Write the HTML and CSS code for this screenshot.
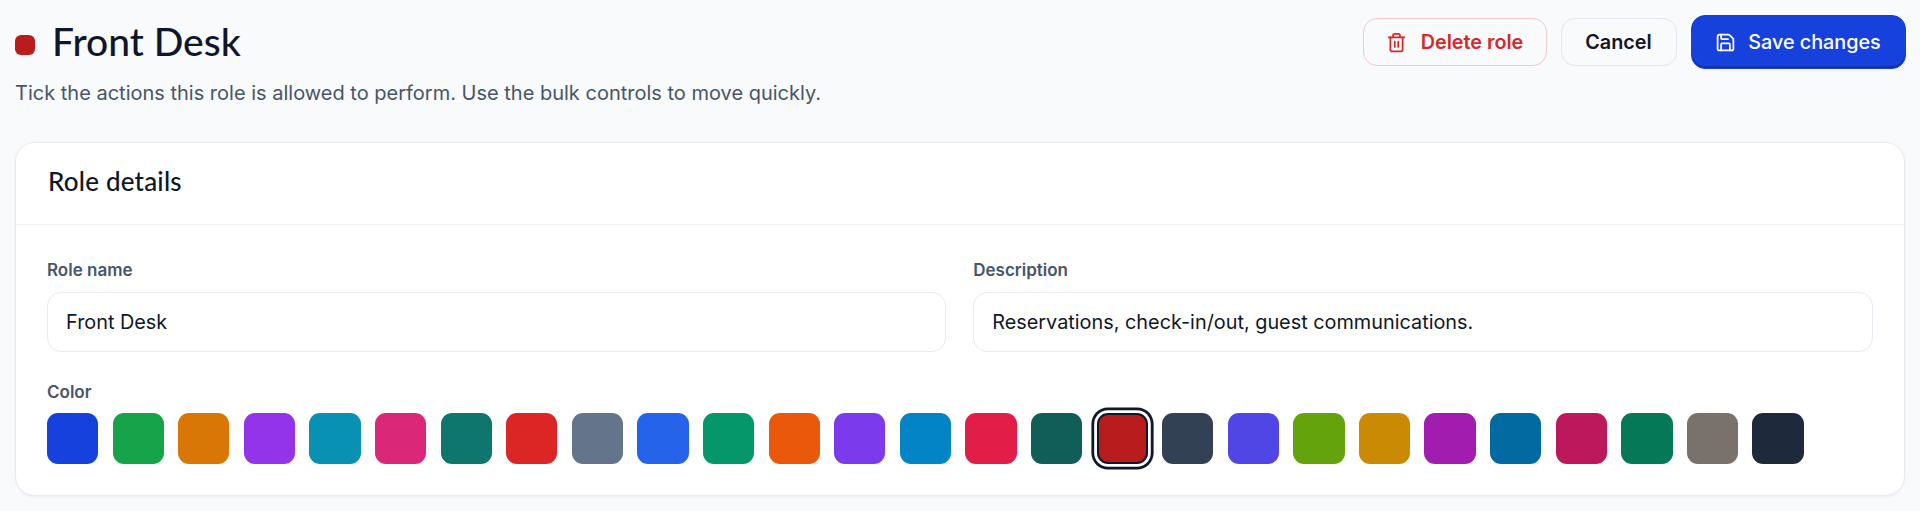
FILE: index.html
```html
<!DOCTYPE html>
<html lang="en">
<head>
<meta charset="utf-8">
<title>Front Desk role</title>
<link rel="stylesheet" href="styles.css">
</head>
<body>
<main class="page">
  <header class="page-head">
    <div class="head-text">
      <div class="title-row">
        <span class="role-dot"></span>
        <h1 class="title">Front Desk</h1>
      </div>
      <p class="subtitle">Tick the actions this role is allowed to perform. Use the bulk controls to move quickly.</p>
    </div>
    <div class="actions">
      <button class="btn btn-danger" type="button">
        <svg class="icon" viewBox="0 0 24 24" aria-hidden="true"><path d="M3 6h18"/><path d="M19 6v14a2 2 0 0 1-2 2H7a2 2 0 0 1-2-2V6"/><path d="M8 6V4a2 2 0 0 1 2-2h4a2 2 0 0 1 2 2v2"/><path d="M10 11v6"/><path d="M14 11v6"/></svg>
        Delete role
      </button>
      <button class="btn btn-ghost" type="button">Cancel</button>
      <button class="btn btn-primary" type="button">
        <svg class="icon" viewBox="0 0 24 24" aria-hidden="true"><path d="M15.2 3a2 2 0 0 1 1.4.6l3.8 3.8a2 2 0 0 1 .6 1.4V19a2 2 0 0 1-2 2H5a2 2 0 0 1-2-2V5a2 2 0 0 1 2-2z"/><path d="M17 21v-7a1 1 0 0 0-1-1H8a1 1 0 0 0-1 1v7"/><path d="M7 3v4a1 1 0 0 0 1 1h7"/></svg>
        Save changes
      </button>
    </div>
  </header>

  <section class="card">
    <h2 class="card-title">Role details</h2>
    <div class="card-body">
      <div class="fields">
        <label class="field">
          <span class="label">Role name</span>
          <input class="input" type="text" value="Front Desk">
        </label>
        <label class="field">
          <span class="label">Description</span>
          <input class="input" type="text" value="Reservations, check-in/out, guest communications.">
        </label>
      </div>
      <div class="color-field">
        <span class="label">Color</span>
        <div class="swatches">
          <span class="swatch" style="background:#1741dc"></span>
          <span class="swatch" style="background:#16a34a"></span>
          <span class="swatch" style="background:#d97706"></span>
          <span class="swatch" style="background:#9333ea"></span>
          <span class="swatch" style="background:#0891b2"></span>
          <span class="swatch" style="background:#db2777"></span>
          <span class="swatch" style="background:#0f766e"></span>
          <span class="swatch" style="background:#dc2626"></span>
          <span class="swatch" style="background:#64748b"></span>
          <span class="swatch" style="background:#2563eb"></span>
          <span class="swatch" style="background:#059669"></span>
          <span class="swatch" style="background:#ea580c"></span>
          <span class="swatch" style="background:#7c3aed"></span>
          <span class="swatch" style="background:#0284c7"></span>
          <span class="swatch" style="background:#e11d48"></span>
          <span class="swatch" style="background:#115e59"></span>
          <span class="swatch is-selected" style="background:#b91c1c"></span>
          <span class="swatch" style="background:#334155"></span>
          <span class="swatch" style="background:#4f46e5"></span>
          <span class="swatch" style="background:#65a30d"></span>
          <span class="swatch" style="background:#ca8a04"></span>
          <span class="swatch" style="background:#a21caf"></span>
          <span class="swatch" style="background:#0369a1"></span>
          <span class="swatch" style="background:#be185d"></span>
          <span class="swatch" style="background:#047857"></span>
          <span class="swatch" style="background:#78716c"></span>
          <span class="swatch" style="background:#1e293b"></span>
        </div>
      </div>
    </div>
  </section>
</main>
</body>
</html>
```
FILE: styles.css
```css
* { box-sizing: border-box; }
html, body { margin: 0; height: 100%; }
body {
  background: #f8fafc;
  color: #0f172a;
  font-family: Inter, "Liberation Sans", sans-serif;
  overflow: hidden;
}
.page { padding: 15px 15px 0; }
.page-head {
  display: flex;
  justify-content: space-between;
  align-items: flex-start;
  height: 127px;
}
.title-row { display: flex; align-items: center; gap: 17px; height: 52px; }
.role-dot { width: 20px; height: 20px; border-radius: 6px; background: #b91c1c; margin-top: 8px; }
.title { margin: 0; font: 500 39px/52px Lato, Inter, sans-serif; color: #0f172a; }
.subtitle { margin: 14px 0 0; font-size: 20px; line-height: 24px; color: #475569; }
.actions { display: flex; align-items: center; gap: 14px; height: 54px; margin-right: -0.5px; }
.btn {
  display: inline-flex;
  align-items: center;
  justify-content: center;
  gap: 14px;
  height: 48px;
  border-radius: 14px;
  font: 600 19.8px/24px Inter, sans-serif;
  background: #f8fafc;
  border: 1.4px solid #e2e8f0;
  color: #0f172a;
  padding: 0;
}
.btn-danger { width: 184px; color: #d22a2a; border-color: #f3caca; }
.btn-ghost { width: 116px; }
.btn-primary {
  width: 215px;
  height: 54px;
  gap: 12px;
  color: #fff;
  background: #1741dc;
  border-color: #1741dc;
  font-weight: 500;
  box-shadow: inset 0 -2px 0 rgba(10, 30, 120, .45);
}
.icon {
  width: 21px; height: 21px;
  fill: none; stroke: currentColor; stroke-width: 2;
  stroke-linecap: round; stroke-linejoin: round;
}
.card {
  background: #fff;
  border: 1.4px solid #e8ebf1;
  border-radius: 20px;
  box-shadow: 0 1px 3px rgba(15, 23, 42, .06);
  height: 354px;
}
.card-title {
  margin: 0;
  height: 82px;
  padding: 0 32px;
  border-bottom: 1.4px solid #eef1f5;
  font: 500 26px/76px Lato, Inter, sans-serif;
  letter-spacing: .2px;
  color: #0f172a;
}
.card-body { padding: 33px 31.5px 0 31px; }
.fields { display: grid; grid-template-columns: 1fr 1fr; gap: 27px; }
.field { display: flex; flex-direction: column; gap: 10px; }
.label { font-size: 17px; line-height: 24px; font-weight: 600; color: #475569; display: block; }
.input {
  height: 60px;
  width: 100%;
  padding: 0 18px;
  border: 1.4px solid #e8ebf1;
  border-radius: 14px;
  background: #fff;
  color: #0f172a;
  font: 400 19.85px Inter, sans-serif;
}
.color-field { margin-top: 28px; }
.swatches { display: flex; gap: 14.3px; margin-top: 9px; }
.swatch { width: 51.3px; height: 51.3px; border-radius: 11px; flex: none; }
.is-selected {
  border: 2.8px solid #0f172a;
  box-shadow: 0 0 0 2.8px #fff, 0 0 0 5.6px #0f172a;
}
```
